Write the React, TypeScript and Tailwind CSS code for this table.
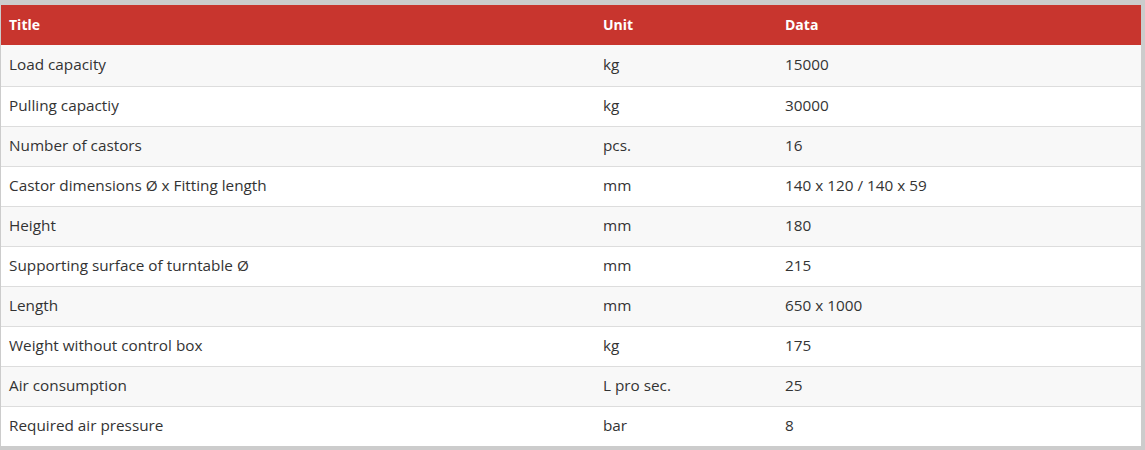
const rows: [string, string, string][] = [
  ['Load capacity', 'kg', '15000'],
  ['Pulling capactiy', 'kg', '30000'],
  ['Number of castors', 'pcs.', '16'],
  ['Castor dimensions Ø x Fitting length', 'mm', '140 x 120 / 140 x 59'],
  ['Height', 'mm', '180'],
  ['Supporting surface of turntable Ø', 'mm', '215'],
  ['Length', 'mm', '650 x 1000'],
  ['Weight without control box', 'kg', '175'],
  ['Air consumption', 'L pro sec.', '25'],
  ['Required air pressure', 'bar', '8'],
];

export default function App() {
  return (
    <div className="w-[1145px] h-[450px] bg-[#cccccc] pt-[5px] pl-px pr-[4px] pb-[4px] font-['Open_Sans','Liberation_Sans',sans-serif]">
      <div className="bg-white">
        {/* header */}
        <div className="grid grid-cols-[594px_182px_1fr] h-[40px] pb-[2px] bg-[#c8352e] text-white font-bold text-[14px]">
          <div className="flex items-center px-2">Title</div>
          <div className="flex items-center px-2">Unit</div>
          <div className="flex items-center px-2">Data</div>
        </div>

        {/* body */}
        {rows.map((r, i) => (
          <div
            key={r[0]}
            className={`grid grid-cols-[594px_182px_1fr] pb-[2px] text-[15.3px] text-[#333333] ${
              i === 0 ? 'h-[41px]' : 'h-[40px] border-t border-[#dddddd]'
            } ${i % 2 === 0 ? 'bg-[#f8f8f8]' : 'bg-white'}`}
          >
            <div className="flex items-center px-2">{r[0]}</div>
            <div className="flex items-center px-2">{r[1]}</div>
            <div className="flex items-center px-2">{r[2]}</div>
          </div>
        ))}
      </div>
    </div>
  );
}
